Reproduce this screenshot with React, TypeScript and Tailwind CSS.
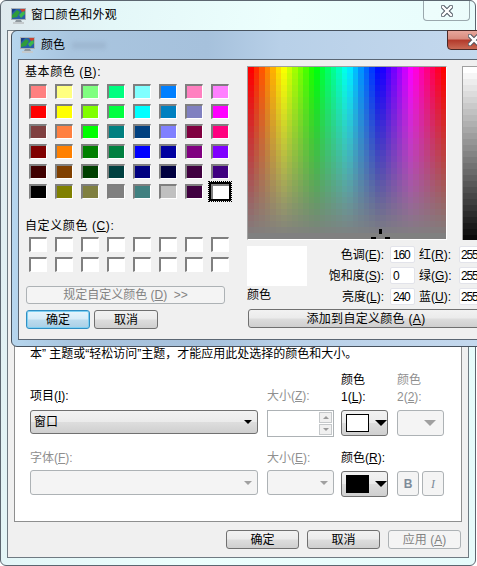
import type { ReactNode } from 'react'

const BASIC_COLORS = [
  '#ff8080', '#ffff80', '#80ff80', '#00ff80', '#80ffff', '#0080ff', '#ff80c0', '#ff80ff',
  '#ff0000', '#ffff00', '#80ff00', '#00ff40', '#00ffff', '#0080c0', '#8080c0', '#ff00ff',
  '#804040', '#ff8040', '#00ff00', '#008080', '#004080', '#8080ff', '#800040', '#ff0080',
  '#800000', '#ff8000', '#008000', '#008040', '#0000ff', '#0000a0', '#800080', '#8000ff',
  '#400000', '#804000', '#004000', '#004040', '#000080', '#000040', '#400040', '#400080',
  '#000000', '#808000', '#808040', '#808080', '#408080', '#c0c0c0', '#400040', '#ffffff',
]

const SPECTRUM_COLS = 36
const SPECTRUM_ROWS = 29

function Hot({ children }: { children: ReactNode }) {
  return <span className="underline">{children}</span>
}

function WindowIcon() {
  return (
    <svg width="18" height="18" viewBox="0 0 18 18" className="shrink-0">
      <rect x="1" y="1" width="15" height="12" fill="#a8b0b6" />
      <rect x="2" y="2" width="13" height="10" fill="#2a5fa8" />
      <path d="M2 8 L7 3 L10 5 L7 10 L2 11 Z" fill="#2f9c3a" />
      <path d="M9 8 L14 3 L15 7 L11 11 Z" fill="#3cb84c" />
      <path d="M10 2 L15 2 L15 4 L12 5 Z" fill="#c9402f" />
      <path d="M2 2 H6 L2 6 Z" fill="#1a3f86" />
      <path d="M6 13 H11 L12 15 H5 Z" fill="#8e979d" />
      <rect x="3" y="15" width="11" height="2" fill="#c4cacd" />
    </svg>
  )
}

function CloseGlyph({ size }: { size: number }) {
  return (
    <svg width={size} height={size} viewBox="0 0 12 12">
      <path d="M2 2 L10 10 M10 2 L2 10" stroke="#4d5560" strokeWidth="4.4" strokeLinecap="square" />
      <path d="M2 2 L10 10 M10 2 L2 10" stroke="#ffffff" strokeWidth="2.4" strokeLinecap="square" />
    </svg>
  )
}

function Arrow({ color, w = 12, h = 6 }: { color: string; w?: number; h?: number }) {
  return (
    <svg width={w} height={h} viewBox={`0 0 ${w} ${h}`} className="shrink-0">
      <path d={`M0 0 H${w} L${w / 2} ${h} Z`} fill={color} />
    </svg>
  )
}

function Well({ color, selected }: { color: string; selected?: boolean }) {
  if (selected) {
    return (
      <div
        className="w-[18px] h-[15px] border-t-2 border-l-2 border-t-[#7f7f7f] border-l-[#7f7f7f] shadow-[0_0_0_2px_#000] outline outline-1 outline-dotted outline-black outline-offset-2"
        style={{ backgroundColor: color }}
      />
    )
  }
  return (
    <div
      className="w-[18px] h-[15px] border-t-2 border-l-2 border-r border-b border-t-[#7f7f7f] border-l-[#7f7f7f] border-r-white border-b-white"
      style={{ backgroundColor: color }}
    />
  )
}

function PushButton({ children, className }: { children: ReactNode; className: string }) {
  return (
    <div className={`flex items-center justify-center rounded-[3px] border border-[#707070] bg-[linear-gradient(#f2f2f2_0%,#ebebeb_48%,#dddddd_52%,#cfcfcf_100%)] text-[12px] text-black ${className}`}>
      {children}
    </div>
  )
}

function DisabledButton({ children, className }: { children: ReactNode; className: string }) {
  return (
    <div className={`flex items-center justify-center rounded-[3px] border border-[#adb2b5] bg-[#f4f4f4] text-[12px] text-[#838383] ${className}`}>
      {children}
    </div>
  )
}

function NumberField({ value, className }: { value: string; className: string }) {
  return (
    <div className={`h-[17px] flex items-center bg-white border border-[#e2e3ea] rounded-[2px] text-[12px] tracking-[-1.2px] ${className}`}>
      {value}
    </div>
  )
}

function Spectrum() {
  const cells = []
  for (let r = 0; r < SPECTRUM_ROWS; r++) {
    for (let c = 0; c < SPECTRUM_COLS; c++) {
      const hue = (c / (SPECTRUM_COLS - 1)) * 360
      const sat = 100 - (r / (SPECTRUM_ROWS - 1)) * 100
      cells.push(<rect key={`${r}-${c}`} x={c} y={r} width="1" height="1" fill={`hsl(${hue} ${sat}% 50%)`} />)
    }
  }
  return (
    <div className="relative shrink-0 w-[200px] h-[174px] border-t border-l border-[#a0a0a0] border-r border-r-white border-b border-b-white">
      <svg width="198" height="172" viewBox={`0 0 ${SPECTRUM_COLS} ${SPECTRUM_ROWS}`} preserveAspectRatio="none" shapeRendering="crispEdges" className="block">
        {cells}
      </svg>
      {/* crosshair, sits at hue 160 / sat 0 */}
      <div className="absolute left-[131px] top-[162px] w-[3px] h-[5px] bg-black" />
      <div className="absolute left-[123px] top-[170px] w-[5px] h-[2px] bg-black" />
      <div className="absolute left-[137px] top-[170px] w-[5px] h-[2px] bg-black" />
    </div>
  )
}

function LuminanceStrip() {
  const rows = []
  for (let i = 0; i < 30; i++) {
    const v = Math.round(255 - (i / 29) * 255)
    rows.push(<div key={i} className="h-[6px]" style={{ backgroundColor: `rgb(${v},${v},${v})` }} />)
  }
  return (
    <div className="w-[30px] h-[174px] shrink-0 overflow-hidden border-t border-l border-[#a0a0a0]">
      {rows}
    </div>
  )
}

function ColorDialog() {
  return (
    <div className="absolute left-[11px] top-[30px] w-[490px] h-[317px] flex flex-col rounded-[6px] border border-[#47525e] bg-[linear-gradient(90deg,#b6d6ee_0%,#a9c5df_12%,#a6c1dc_40%,#b8d0e8_55%,#c5d9ee_100%)]">
      <div className="h-[28px] flex items-center pl-[7px]">
        <WindowIcon />
        <span className="ml-[4px] text-[12px] text-black">颜色</span>
        <div className="ml-[7px] w-[34px] h-[7px] bg-[#8ea4bd] opacity-40 blur-[2px]" />
      </div>
      <div className="absolute left-[435px] -top-px w-[60px] h-[20px] rounded-b-[4px] border border-[#4a2a28] bg-[linear-gradient(#e7a79c_0%,#d88a7d_45%,#b2392a_50%,#c96a55_100%)] pl-[20px] flex items-center">
        <CloseGlyph size={12} />
      </div>
      <div className="mx-[6px] mb-[6px] flex-1 flex bg-[#f0f0f0] border border-[#5b6673] text-[12px] text-black">
        <div className="w-[228px] shrink-0 pl-[6px] pt-[5px]">
          <div className="h-[14px] leading-[14px] tracking-[0.6px]">基本颜色 (<Hot>B</Hot>):</div>
          <div className="mt-[5px] ml-[4px] grid grid-cols-[repeat(8,18px)] gap-x-[8px] gap-y-[5px]">
            {BASIC_COLORS.map((color, i) => (
              <Well key={i} color={color} selected={i === BASIC_COLORS.length - 1} />
            ))}
          </div>
          <div className="mt-[20px] h-[14px] leading-[14px] tracking-[0.6px]">自定义颜色 (<Hot>C</Hot>):</div>
          <div className="mt-[4px] ml-[4px] grid grid-cols-[repeat(8,18px)] gap-x-[8px] gap-y-[5px]">
            {Array.from({ length: 16 }).map((_, i) => (
              <Well key={i} color="#ffffff" />
            ))}
          </div>
          <DisabledButton className="mt-[14px] ml-px w-[199px] h-[18px]">规定自定义颜色 (<Hot>D</Hot>) &nbsp;&gt;&gt;</DisabledButton>
          <div className="mt-[6px] ml-px flex gap-[4px]">
            <div className="w-[64px] h-[19px] flex items-center justify-center rounded-[3px] border border-[#2f8fc4] shadow-[0_0_0_1px_#7fd0f2_inset] bg-[linear-gradient(#e6f5fc_0%,#d6ecf8_48%,#bcdcee_52%,#a9cfe6_100%)]">确定</div>
            <PushButton className="w-[64px] h-[19px]">取消</PushButton>
          </div>
        </div>
        <div className="flex-1 pt-[6px]">
          <div className="flex gap-[15px]">
            <Spectrum />
            <LuminanceStrip />
          </div>
          <div className="mt-[6px] flex h-[59px]">
            <div className="w-[60px] shrink-0">
              <div className="h-[40px] bg-white" />
              <div className="mt-[1px] leading-[16px]">颜色</div>
            </div>
            <div className="ml-[20px] grid grid-cols-[63px_25px_44px_40px] grid-rows-[17px_17px_17px] gap-y-[4px] items-center">
              <div className="text-right pr-[6px] whitespace-nowrap">色调(<Hot>E</Hot>):</div>
              <NumberField value="160" className="w-[25px] pl-[2px]" />
              <div className="pl-[4px] whitespace-nowrap">红(<Hot>R</Hot>):</div>
              <NumberField value="255" className="w-[40px] pl-[1px]" />
              <div className="text-right pr-[6px] whitespace-nowrap">饱和度(<Hot>S</Hot>):</div>
              <NumberField value="0" className="w-[25px] pl-[2px]" />
              <div className="pl-[4px] whitespace-nowrap">绿(<Hot>G</Hot>):</div>
              <NumberField value="255" className="w-[40px] pl-[1px]" />
              <div className="text-right pr-[6px] whitespace-nowrap">亮度(<Hot>L</Hot>):</div>
              <NumberField value="240" className="w-[25px] pl-[2px]" />
              <div className="pl-[4px] whitespace-nowrap">蓝(<Hot>U</Hot>):</div>
              <NumberField value="255" className="w-[40px] pl-[1px]" />
            </div>
          </div>
          <PushButton className="mt-[4px] ml-px w-[240px] h-[19px] pr-[4px] tracking-[0.3px]">添加到自定义颜色 (<Hot>A</Hot>)</PushButton>
        </div>
      </div>
    </div>
  )
}

function AppearancePanel() {
  return (
    <div className="mx-[6px] flex-1 bg-white border border-[#8e8f8f] pl-[15px] pt-[315px] text-[12px] text-black">
      <div className="h-[14px] leading-[14px] whitespace-nowrap">本” 主题或“轻松访问”主题，才能应用此处选择的颜色和大小。</div>
      <div className="mt-[10px] grid grid-cols-[237px_74px_56px_47px] grid-rows-[39px_41px_19px_27px]">
        <div className="flex items-end pb-[5px]">项目(<Hot>I</Hot>):</div>
        <div className="flex items-end pb-[5px] text-[#8f8f8f]">大小(<Hot>Z</Hot>):</div>
        <div className="flex flex-col justify-end pb-[4px] leading-[17px]"><span>颜色</span><span>1(<Hot>L</Hot>):</span></div>
        <div className="flex flex-col justify-end pb-[4px] leading-[17px] text-[#8f8f8f]"><span>颜色</span><span>2(<Hot>2</Hot>):</span></div>

        <div>
          <div className="w-[228px] h-[24px] flex items-center justify-between pl-[3px] pr-[5px] rounded-[3px] border border-[#707070] bg-[linear-gradient(#f2f2f2_0%,#ebebeb_48%,#dddddd_52%,#cfcfcf_100%)]">
            <span>窗口</span>
            <Arrow color="#000000" w={8} h={4} />
          </div>
        </div>
        <div>
          <div className="w-[67px] h-[27px] flex justify-end border border-[#adb2b5] bg-white">
            <div className="w-[15px] flex flex-col gap-px p-px">
              <div className="flex-1 flex items-center justify-center border border-[#c5c8ca] bg-[#f0f0f0]"><svg width="6" height="3" viewBox="0 0 6 3"><path d="M0 3 L3 0 L6 3 Z" fill="#9a9a9a" /></svg></div>
              <div className="flex-1 flex items-center justify-center border border-[#c5c8ca] bg-[#f0f0f0]"><Arrow color="#9a9a9a" w={6} h={3} /></div>
            </div>
          </div>
        </div>
        <div>
          <PushButton className="w-[47px] h-[26px] !justify-start gap-[6px] pl-[4px]">
            <div className="w-[23px] h-[18px] bg-white border border-black" />
            <Arrow color="#000000" />
          </PushButton>
        </div>
        <div>
          <DisabledButton className="w-[47px] h-[26px] !justify-end pr-[7px]"><Arrow color="#a0a0a0" /></DisabledButton>
        </div>

        <div className="text-[#8f8f8f] leading-[14px]">字体(<Hot>F</Hot>):</div>
        <div className="text-[#8f8f8f] leading-[14px]">大小(<Hot>E</Hot>):</div>
        <div className="leading-[14px]">颜色(<Hot>R</Hot>):</div>
        <div />

        <div>
          <DisabledButton className="w-[228px] h-[25px] !justify-end pr-[5px]"><Arrow color="#a0a0a0" w={8} h={4} /></DisabledButton>
        </div>
        <div>
          <DisabledButton className="w-[67px] h-[25px] !justify-end pr-[5px]"><Arrow color="#a0a0a0" w={8} h={4} /></DisabledButton>
        </div>
        <div>
          <PushButton className="w-[47px] h-[26px] mt-px !justify-start gap-[6px] pl-[4px]">
            <div className="w-[23px] h-[18px] bg-black" />
            <Arrow color="#000000" />
          </PushButton>
        </div>
        <div className="flex gap-[3px] mt-px">
          <DisabledButton className="w-[22px] h-[25px] font-bold !text-[#7d8b99]">B</DisabledButton>
          <DisabledButton className="w-[22px] h-[25px] italic !text-[#7d8b99] font-['Liberation_Serif',serif]">I</DisabledButton>
        </div>
      </div>
    </div>
  )
}

export default function App() {
  return (
    <div className="relative w-[477px] h-[566px] overflow-hidden bg-white font-['Liberation_Sans','Noto_Sans_CJK_SC',sans-serif]">
      <div className="w-[476px] h-[566px] flex flex-col rounded-[6px] border border-[#5c6670] bg-[linear-gradient(100deg,#dfe9ee_0%,#e4f7f8_20%,#ecfffd_50%,#e6fbfb_100%)]">
        <div className="h-[29px] flex items-start pl-[9px] pt-[6px]">
          <WindowIcon />
          <span className="ml-[3px] text-[12px] leading-[16px] text-black tracking-[0.3px]">窗口颜色和外观</span>
          <div className="ml-auto mr-[5px] -mt-[6px] w-[47px] h-[20px] flex items-center justify-center rounded-b-[4px] border border-t-0 border-[#9aa8ad] bg-white/20">
            <CloseGlyph size={12} />
          </div>
        </div>
        <div className="mx-[6px] mb-[7px] flex-1 flex flex-col bg-[#f0f0f0] border border-[#6f7a82]">
          <AppearancePanel />
          <div className="h-[35px] flex items-start justify-end gap-[8px] pt-[8px] pr-[7px]">
            <PushButton className="w-[73px] h-[19px]">确定</PushButton>
            <PushButton className="w-[73px] h-[19px]">取消</PushButton>
            <DisabledButton className="w-[73px] h-[19px]">应用 (<Hot>A</Hot>)</DisabledButton>
          </div>
        </div>
      </div>
      <ColorDialog />
    </div>
  )
}
